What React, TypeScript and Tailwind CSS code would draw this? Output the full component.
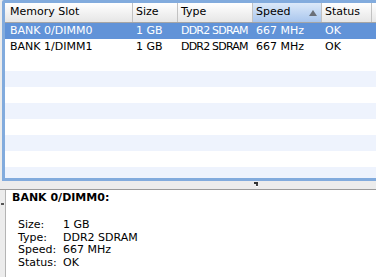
import React from 'react';

const cols = [
  { key: 'slot', label: 'Memory Slot', w: 'w-[128px]', pl: 'pl-[5px]' },
  { key: 'size', label: 'Size', w: 'w-[45px]', pl: 'pl-[3px]' },
  { key: 'type', label: 'Type', w: 'w-[75px]', pl: 'pl-[3px]' },
  { key: 'speed', label: 'Speed', w: 'w-[69px]', pl: 'pl-[3px]' },
  { key: 'status', label: 'Status', w: 'w-[50px]', pl: 'pl-[3px]' },
];

const rows = [
  { slot: 'BANK 0/DIMM0', size: '1 GB', type: 'DDR2 SDRAM', speed: '667 MHz', status: 'OK' },
  { slot: 'BANK 1/DIMM1', size: '1 GB', type: 'DDR2 SDRAM', speed: '667 MHz', status: 'OK' },
];

const emptyRows = [false, true, false, true, false, true, false, true];

export default function App() {
  return (
    <div
      className="w-[376px] h-[277px] overflow-hidden bg-[#ececec] flex flex-col text-[11px] text-black"
      style={{ fontFamily: '"DejaVu Sans", "Liberation Sans", sans-serif' }}
    >
      {/* table with focus ring */}
      <div className="pl-[2px] h-[181px] shrink-0">
        <div className="w-[390px] h-[181px] border-[3px] border-[#82abdd] rounded-tl-[2px] bg-white overflow-hidden">
          <div className="flex h-[20px] border-b border-[#a5a5a5] bg-gradient-to-b from-[#ffffff] to-[#e6e6e6]">
            {cols.map((c) => (
              <div
                key={c.key}
                className={`${c.w} ${c.pl} shrink-0 flex items-center border-r border-[#c2c2c2] ${
                  c.key === 'speed' ? 'bg-gradient-to-b from-[#dce9f9] to-[#a9c6ed] justify-between pr-[4px]' : ''
                }`}
              >
                <span>{c.label}</span>
                {c.key === 'speed' && (
                  <svg width="8" height="6" viewBox="0 0 8 6">
                    <path d="M4 0 L8 6 L0 6 Z" fill="#6a6f78" />
                  </svg>
                )}
              </div>
            ))}
            <div className="flex-1" />
          </div>
          {rows.map((r, i) => (
            <div
              key={r.slot}
              className={`flex h-[16px] items-center ${i === 0 ? 'bg-[#6193d8] text-white' : 'bg-white'}`}
            >
              {cols.map((c) => (
                <div
                  key={c.key}
                  className={`${c.w} ${c.pl} shrink-0 whitespace-nowrap overflow-hidden ${
                    c.key === 'type' ? 'tracking-[-0.8px]' : ''
                  }`}
                >
                  {r[c.key as keyof typeof r]}
                </div>
              ))}
            </div>
          ))}
          {emptyRows.map((s, i) => (
            <div key={i} className={`h-[16px] ${s ? 'bg-[#eef3fd]' : 'bg-white'}`} />
          ))}
        </div>
      </div>

      {/* splitter */}
      <div className="h-[9px] shrink-0 border-b border-[#9b9b9b] flex items-start">
        <div className="ml-[254px] mt-[1px] flex flex-col">
          <div className="w-[4px] h-[2px] bg-[#333]" />
          <div className="ml-[2px] w-[2px] h-[2px] bg-[#444]" />
          <div className="ml-[2px] w-[2px] h-[1px] bg-white" />
        </div>
      </div>

      {/* detail panel */}
      <div className="flex flex-1">
        <div className="w-[5px] shrink-0 relative">
          <div className="absolute left-[1px] top-[13px] w-[3px] h-[2px] bg-[#555]" />
        </div>
        <div className="flex-1 bg-white border-l border-[#b4b4b4] pl-[6px] pt-[1px]">
          <div className="font-bold leading-[13px] h-[13px]">BANK 0/DIMM0:</div>
          <div className="mt-[15px] pl-[6px] leading-[12.7px]">
            {[
              ['Size:', '1 GB'],
              ['Type:', 'DDR2 SDRAM'],
              ['Speed:', '667 MHz'],
              ['Status:', 'OK'],
            ].map(([k, v]) => (
              <div key={k} className="flex">
                <span className="w-[45px] shrink-0">{k}</span>
                <span>{v}</span>
              </div>
            ))}
          </div>
        </div>
      </div>
    </div>
  );
}
